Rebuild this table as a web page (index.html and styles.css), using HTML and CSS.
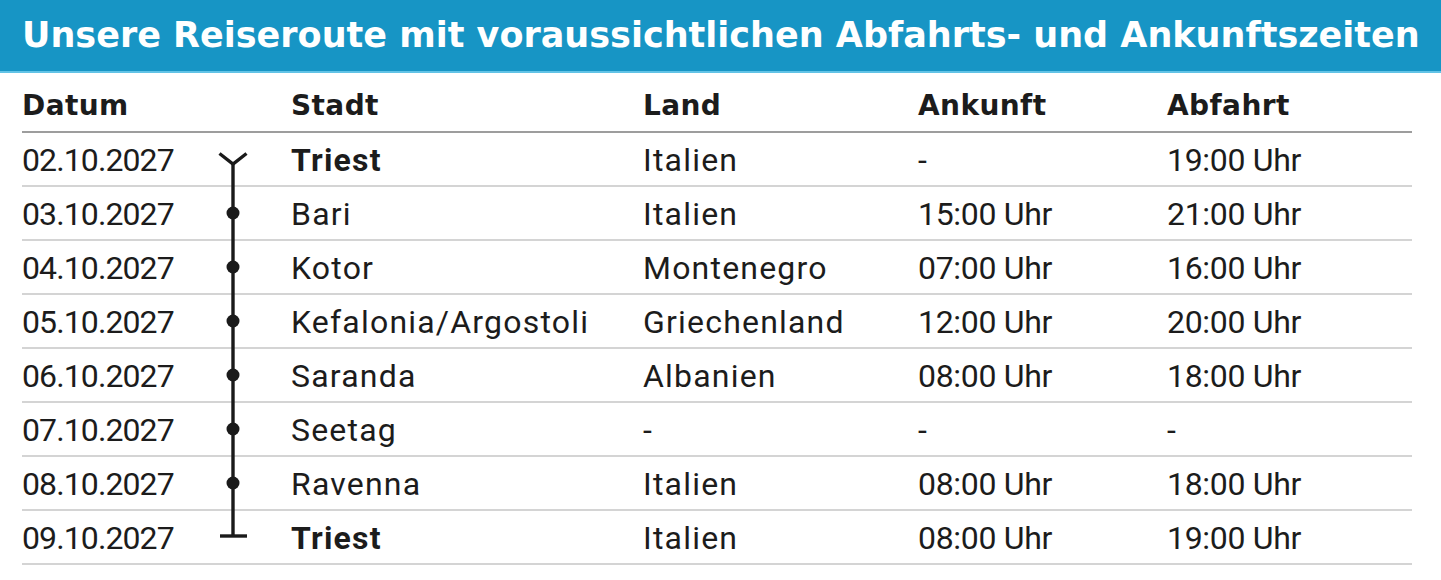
FILE: index.html
```html
<!DOCTYPE html>
<html lang="de">
<head>
<meta charset="utf-8">
<title>Reiseroute</title>
<link rel="stylesheet" href="styles.css">
</head>
<body>
<header class="banner">
  <h1 class="title">Unsere Reiseroute mit voraussichtlichen Abfahrts- und Ankunftszeiten</h1>
</header>
<div class="table">
  <div class="row head">
    <div>Datum</div><div>Stadt</div><div>Land</div><div>Ankunft</div><div>Abfahrt</div>
  </div>
  <div class="body">
    <svg class="timeline" width="260" height="432" viewBox="0 0 260 432" aria-hidden="true">
      <g stroke="#1a1a1a" stroke-width="3.4" fill="none" stroke-linecap="butt">
        <polyline points="197.5,20.5 211,31 224.5,20.5"/>
        <line x1="211" y1="30" x2="211" y2="404"/>
        <line x1="198" y1="403" x2="225" y2="403"/>
      </g>
      <g fill="#1a1a1a">
        <circle cx="211" cy="80" r="6.5"/>
        <circle cx="211" cy="134" r="6.5"/>
        <circle cx="211" cy="188" r="6.5"/>
        <circle cx="211" cy="242" r="6.5"/>
        <circle cx="211" cy="296" r="6.5"/>
        <circle cx="211" cy="350" r="6.5"/>
      </g>
    </svg>
    <div class="row"><div class="d">02.10.2027</div><div class="t b">Triest</div><div class="t">Italien</div><div class="n">-</div><div class="n">19:00 Uhr</div></div>
    <div class="row"><div class="d">03.10.2027</div><div class="t">Bari</div><div class="t">Italien</div><div class="n">15:00 Uhr</div><div class="n">21:00 Uhr</div></div>
    <div class="row"><div class="d">04.10.2027</div><div class="t">Kotor</div><div class="t">Montenegro</div><div class="n">07:00 Uhr</div><div class="n">16:00 Uhr</div></div>
    <div class="row"><div class="d">05.10.2027</div><div class="t">Kefalonia/Argostoli</div><div class="t">Griechenland</div><div class="n">12:00 Uhr</div><div class="n">20:00 Uhr</div></div>
    <div class="row"><div class="d">06.10.2027</div><div class="t">Saranda</div><div class="t">Albanien</div><div class="n">08:00 Uhr</div><div class="n">18:00 Uhr</div></div>
    <div class="row"><div class="d">07.10.2027</div><div class="t">Seetag</div><div class="t">-</div><div class="n">-</div><div class="n">-</div></div>
    <div class="row"><div class="d">08.10.2027</div><div class="t">Ravenna</div><div class="t">Italien</div><div class="n">08:00 Uhr</div><div class="n">18:00 Uhr</div></div>
    <div class="row"><div class="d">09.10.2027</div><div class="t b">Triest</div><div class="t">Italien</div><div class="n">08:00 Uhr</div><div class="n">19:00 Uhr</div></div>
  </div>
</div>
</body>
</html>
```
FILE: styles.css
```css
* { box-sizing: border-box; }
html, body { margin: 0; padding: 0; background: #ffffff; }
body {
  font-family: Roboto, "Liberation Sans", sans-serif;
  color: #1c1c1c;
  width: 1441px;
  height: 580px;
  overflow: hidden;
}
.banner {
  height: 73px;
  background: #1795c5;
  border-bottom: 2px solid #62c3e6;
  display: flex;
  align-items: center;
  padding-left: 22px;
  padding-bottom: 2px;
}
.title {
  margin: 0;
  color: #ffffff;
  font-family: "DejaVu Sans", Roboto, sans-serif;
  font-size: 35px;
  font-weight: 700;
  letter-spacing: 0;
  white-space: nowrap;
}
.table {
  margin-left: 22px;
  width: 1390px;
}
.row {
  display: grid;
  grid-template-columns: 269px 352px 275px 249px 245px;
  align-items: center;
  height: 54px;
  padding-top: 2px;
  border-bottom: 2px solid #d4d4d4;
  font-size: 32px;
  font-weight: 400;
  white-space: nowrap;
}
.row.head {
  height: 60px;
  padding-top: 6px;
  border-bottom: 2px solid #9d9d9d;
  font-family: "DejaVu Sans", Roboto, sans-serif;
  font-size: 28px;
  font-weight: 700;
  letter-spacing: 0.4px;
}
.d { letter-spacing: -0.9px; }
.t { letter-spacing: 1.2px; }
.n { letter-spacing: -0.3px; }
.body { position: relative; }
.timeline { position: absolute; left: 0; top: 0; }
.b { font-weight: 700; }
```
